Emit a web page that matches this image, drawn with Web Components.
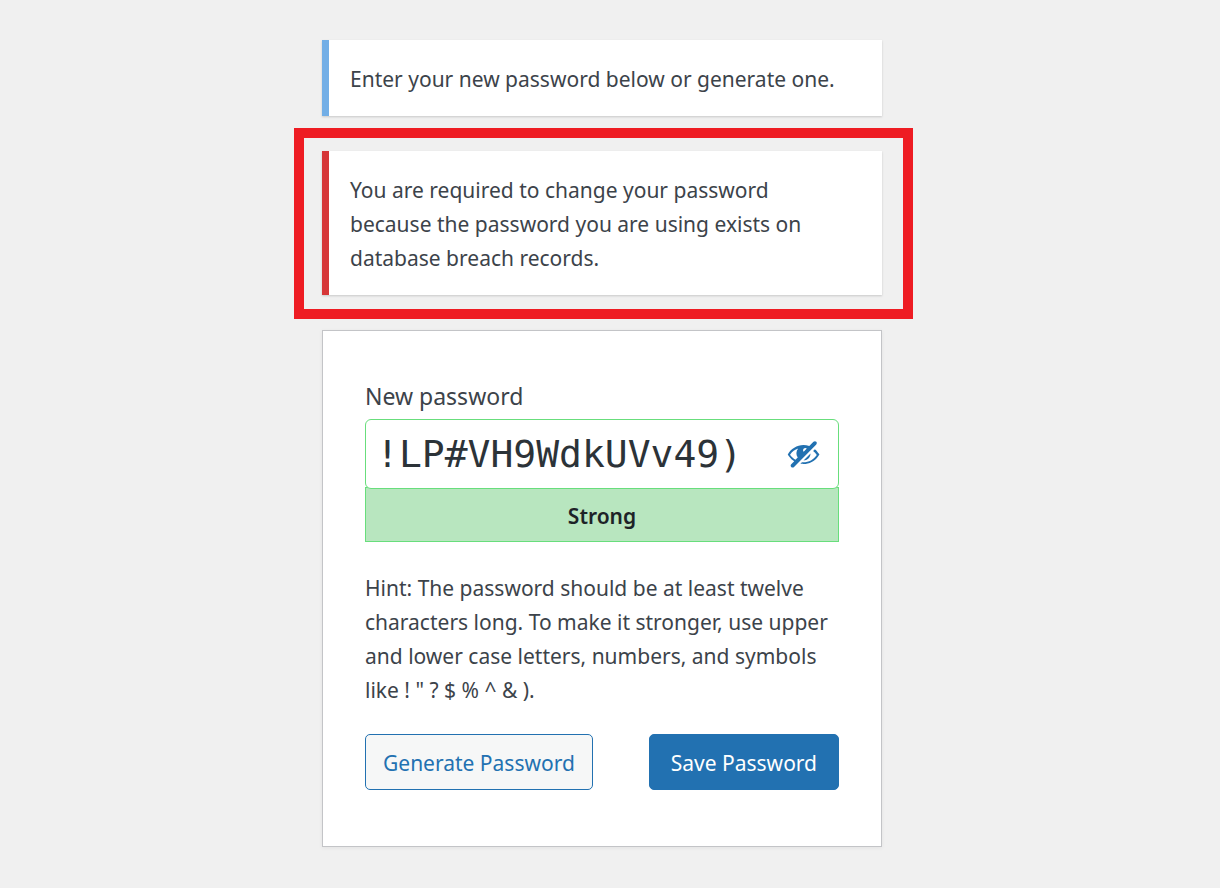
<!DOCTYPE html>
<html lang="en">
<head>
<meta charset="utf-8">
<meta name="viewport" content="width=device-width, initial-scale=1">
<title>Reset Password</title>
<style>
  html { background: #f0f0f0; }
  body {
    margin: 0;
    padding: 40px 16px 40px 0;
    font-family: "Noto Sans", "Open Sans", sans-serif;
    font-size: 21px;
    line-height: 34px;
    color: #3c434a;
  }
</style>
</head>
<body>
<reset-page>
  <login-notice>Enter your new password below or generate one.</login-notice>
  <highlight-frame>
    <login-notice kind="error">You are required to change your password because the password you are using exists on database breach records.</login-notice>
  </highlight-frame>
  <password-form></password-form>
</reset-page>

<script>
const attach = (host, html) => {
  const t = document.createElement('template');
  t.innerHTML = html;
  host.attachShadow({ mode: 'open' }).append(t.content.cloneNode(true));
};

customElements.define('reset-page', class extends HTMLElement {
  constructor() {
    super();
    attach(this, `
      <style>
        :host { display: block; }
        main { display: flex; flex-direction: column; gap: 35px; max-width: 560px; margin: 0 auto; }
      </style>
      <main><slot></slot></main>`);
  }
});

customElements.define('login-notice', class extends HTMLElement {
  constructor() {
    super();
    attach(this, `
      <style>
        :host { display: block; background: #fff; border-left: 7px solid #72aee6; padding: 22px 32px 20px 21px; box-shadow: 0 1px 2px rgba(0,0,0,.16); }
        :host([kind="error"]) { border-left-color: #d63638; }
        p { margin: 0; }
      </style>
      <p><slot></slot></p>`);
  }
});

customElements.define('highlight-frame', class extends HTMLElement {
  constructor() {
    super();
    attach(this, `
      <style>
        :host { display: block; position: relative; }
        :host::after { content: ""; position: absolute; inset: -23px -31px -24px -28px; border: 10px solid #ee1c23; pointer-events: none; }
      </style>
      <slot></slot>`);
  }
});

customElements.define('action-button', class extends HTMLElement {
  constructor() {
    super();
    attach(this, `
      <style>
        :host { display: block; }
        button { box-sizing: border-box; height: 56px; margin: 0; padding: 2px 17px 0; font: inherit; color: #2271b1; background: #f6f7f7; border: 1px solid #2271b1; border-radius: 5px; white-space: nowrap; cursor: pointer; }
        :host([primary]) button { padding: 2px 21px 0; color: #fff; background: #2271b1; }
      </style>
      <button type="button"><slot></slot></button>`);
  }
});

customElements.define('password-field', class extends HTMLElement {
  constructor() {
    super();
    attach(this, `
      <style>
        :host { display: block; }
        label { display: block; font-size: 23px; line-height: 34px; margin-bottom: 6px; }
        .box { position: relative; display: flex; align-items: center; height: 68px; background: #fff; border: 1px solid #68de7c; border-radius: 6px; }
        input { flex: 1; min-width: 0; height: 68px; box-sizing: border-box; padding: 0 0 0 10px; margin: 0; border: 0; outline: 0; background: none; font: 38px "DejaVu Sans Mono", monospace; color: #2c3338; }
        button { display: grid; place-items: center; width: 70px; height: 68px; padding: 0 0 2px; margin: 0; border: 0; background: none; color: #2271b1; cursor: pointer; }
        svg { width: 35px; height: 35px; fill: currentColor; }
        .strength { margin-top: -2px; padding: 11px 0 8px; border: 1px solid #68de7c; background: #b8e6bf; color: #1d2327; font-weight: 600; text-align: center; }
      </style>
      <label for="pass">New password</label>
      <div class="box">
        <input id="pass" type="text" value="!LP#VH9WdkUVv49)" autocomplete="off" spellcheck="false">
        <button type="button" aria-label="Hide password">
          <svg viewBox="0 0 20 20" aria-hidden="true"><path d="M17.3 3.3c-.4-.4-1.1-.4-1.6 0l-2.4 2.4c-1.1-.4-2.2-.6-3.3-.6-3.8.1-7.2 2.1-9 5.4.2.4.5.8.8 1.2.8 1.1 1.8 2 2.9 2.7L3 16.1c-.4.4-.5 1.1 0 1.6.4.4 1.1.5 1.6 0L17.3 4.9c.4-.5.4-1.2 0-1.6zm-10.6 9l-1.3 1.3c-1.2-.7-2.3-1.7-3.1-2.9C3.5 9 5.1 7.8 7 7.2c-1.3 1.4-1.4 3.6-.3 5.1zM10.1 9c-.5-.5-.4-1.3.1-1.8.5-.4 1.2-.4 1.7 0L10.1 9zm8.2.5c-.5-.7-1.1-1.4-1.8-1.9l-1 1c.8.6 1.5 1.3 2.1 2.2C15.9 13.4 13 15 9.9 15h-.8l-1 1c.7-.2 1.3 0 1.9 0 3.3 0 6.4-1.6 8.3-4.3.3-.4.5-.8.8-1.2-.3-.3-.5-.7-.8-1zM14 10l-4 4c2.2 0 4-1.8 4-4z"/></svg>
        </button>
      </div>
      <div class="strength">Strong</div>`);
  }
});

customElements.define('password-form', class extends HTMLElement {
  constructor() {
    super();
    attach(this, `
      <style>
        :host { display: block; }
        form { padding: 48px 42px 56px; background: #fff; border: 1px solid #c3c4c7; box-shadow: 0 1px 4px rgba(0,0,0,.06); }
        .hint { margin: 29px 0 27px; }
        .actions { display: flex; flex-wrap: wrap; justify-content: space-between; gap: 16px; }
      </style>
      <form>
        <password-field></password-field>
        <p class="hint">Hint: The password should be at least twelve characters long. To make it stronger, use upper and lower case letters, numbers, and symbols like ! " ? $ % ^ &amp; ).</p>
        <div class="actions">
          <action-button>Generate Password</action-button>
          <action-button primary>Save Password</action-button>
        </div>
      </form>`);
  }
});
</script>
</body>
</html>
